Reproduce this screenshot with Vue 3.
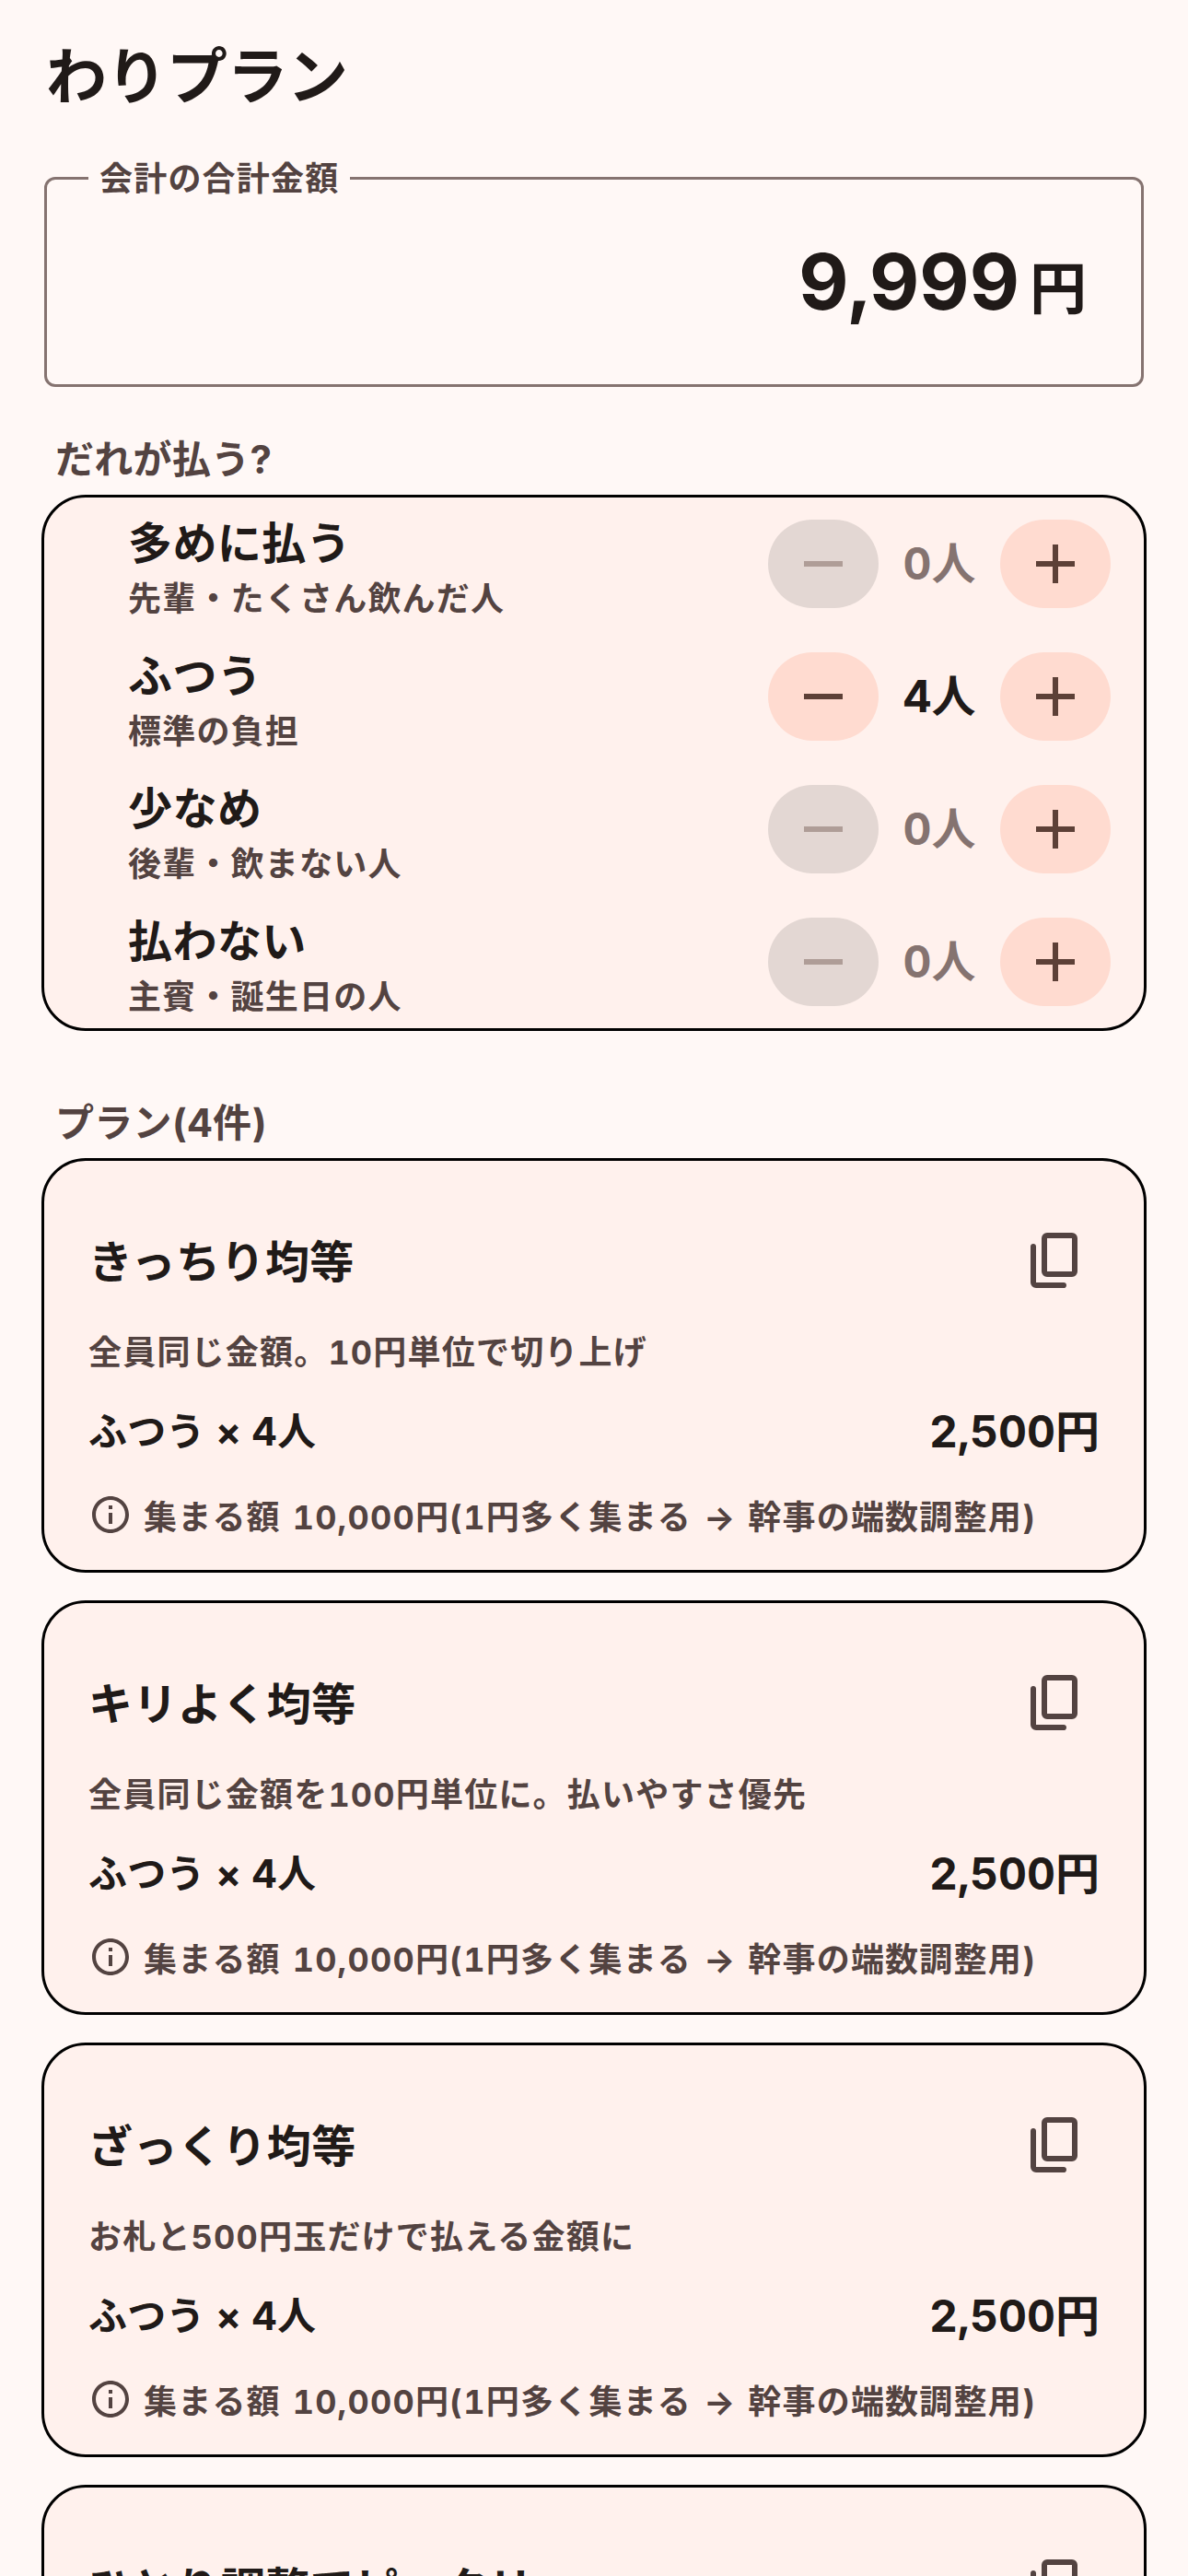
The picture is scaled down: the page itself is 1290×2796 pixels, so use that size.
<script setup>
const rows = [
  { name: '多めに払う', desc: '先輩・たくさん飲んだ人', count: 0 },
  { name: 'ふつう', desc: '標準の負担', count: 4 },
  { name: '少なめ', desc: '後輩・飲まない人', count: 0 },
  { name: '払わない', desc: '主賓・誕生日の人', count: 0 },
]
const note = '集まる額 10,000円(1円多く集まる → 幹事の端数調整用)'
const plans = [
  { title: 'きっちり均等', desc: '全員同じ金額。10円単位で切り上げ', who: 'ふつう × 4人', price: '2,500円', note },
  { title: 'キリよく均等', desc: '全員同じ金額を100円単位に。払いやすさ優先', who: 'ふつう × 4人', price: '2,500円', note },
  { title: 'ざっくり均等', desc: 'お札と500円玉だけで払える金額に', who: 'ふつう × 4人', price: '2,500円', note },
  { title: 'ひとり調整でピッタリ' },
]
</script>

<template>
  <div class="page">
    <h1 class="title">わりプラン</h1>

    <div class="field">
      <span class="field-label">会計の合計金額</span>
      <div class="amount"><span class="amount-num">9,999</span><span class="amount-unit">円</span></div>
    </div>

    <h2 class="section who-label">だれが払う?</h2>
    <section class="card people">
      <div v-for="r in rows" :key="r.name" class="row">
        <div class="row-text">
          <div class="row-name">{{ r.name }}</div>
          <div class="row-desc">{{ r.desc }}</div>
        </div>
        <div class="stepper">
          <button class="step" :class="{ off: r.count === 0 }" type="button" aria-label="減らす">
            <svg viewBox="0 0 24 24" width="72" height="72"><path d="M19 13H5v-2h14v2z" /></svg>
          </button>
          <span class="count" :class="{ zero: r.count === 0 }">{{ r.count }}人</span>
          <button class="step" type="button" aria-label="増やす">
            <svg viewBox="0 0 24 24" width="72" height="72"><path d="M19 13h-6v6h-2v-6H5v-2h6V5h2v6h6v2z" /></svg>
          </button>
        </div>
      </div>
    </section>

    <h2 class="section plan-label">プラン(4件)</h2>
    <div class="plans">
      <article v-for="p in plans" :key="p.title" class="card plan">
        <div class="plan-head">
          <div class="plan-title">{{ p.title }}</div>
          <button class="copy" type="button" aria-label="コピー">
            <svg viewBox="0 -960 960 960" width="72" height="72"><path d="M360-240q-33 0-56.5-23.5T280-320v-480q0-33 23.5-56.5T360-880h360q33 0 56.5 23.5T800-800v480q0 33-23.5 56.5T720-240H360Zm0-80h360v-480H360v480ZM200-80q-33 0-56.5-23.5T120-160v-520q0-17 11.5-28.5T160-720q17 0 28.5 11.5T200-680v520h400q17 0 28.5 11.5T640-120q0 17-11.5 28.5T600-80H200Z" /></svg>
          </button>
        </div>
        <template v-if="p.desc">
          <div class="plan-desc">{{ p.desc }}</div>
          <div class="plan-price">
            <span class="who">{{ p.who }}</span>
            <span class="price">{{ p.price }}</span>
          </div>
          <div class="plan-note">
            <svg viewBox="0 0 24 24" width="48" height="48"><path d="M11 7h2v2h-2zm0 4h2v6h-2zm1-9C6.480 2 2 6.480 2 12s4.480 10 10 10 10-4.480 10-10S17.520 2 12 2zm0 18c-4.410 0-8-3.590-8-8s3.590-8 8-8 8 3.590 8 8-3.590 8-8 8z" /></svg>
            <span class="note-text">{{ p.note }}</span>
          </div>
        </template>
      </article>
    </div>
  </div>
</template>

<style>
html, body { margin: 0; background: #fff8f6; }
</style>

<style scoped>
.page {
  box-sizing: border-box;
  width: 1290px;
  height: 2796px;
  overflow: hidden;
  padding: 0 45px;
  background: #fff8f6;
  color: #201a18;
  font-family: Inter, "Noto Sans CJK JP", sans-serif;
  font-variant-numeric: tabular-nums;
}
.title {
  margin: 0;
  padding-left: 5px;
  height: 192px;
  box-sizing: border-box;
  padding-top: 41px;
  font-size: 66px;
  line-height: 84px;
  font-weight: 700;
  letter-spacing: -0.5px;
}
.field {
  position: relative;
  box-sizing: border-box;
  height: 228px;
  margin: 0 3px;
  border: 3px solid #857370;
  border-radius: 12px;
  padding: 0 59px 0 42px;
  display: flex;
  align-items: center;
  justify-content: flex-end;
}
.field-label {
  position: absolute;
  left: 45px;
  top: -25px;
  padding: 0 12px;
  background: #fff8f6;
  color: #534341;
  font-size: 36px;
  line-height: 48px;
  letter-spacing: 1.2px;
  font-weight: 700;
}
.amount { display: flex; align-items: baseline; gap: 11px; padding-top: 8px; }
.amount-num { font-size: 84px; line-height: 108px; font-weight: 700; }
.amount-unit { font-size: 62px; line-height: 108px; font-weight: 700; }
.section {
  margin: 0;
  padding-left: 15px;
  color: #534341;
  font-size: 42px;
  line-height: 60px;
  font-weight: 700;
  letter-spacing: 0.3px;
}
.who-label { padding-top: 49px; padding-bottom: 8px; }
.plan-label { padding-top: 70px; padding-bottom: 8px; }
.card {
  box-sizing: border-box;
  border: 3px solid #000;
  border-radius: 48px;
  background: #fff1ed;
}
.row {
  height: 144px;
  display: flex;
  align-items: center;
  justify-content: space-between;
  padding: 0 36px 0 91px;
}
.row-text { padding-top: 4px; }
.row-name {
  font-size: 48px;
  line-height: 72px;
  font-weight: 700;
  letter-spacing: 0.45px;
}
.row-desc {
  color: #534341;
  font-size: 36px;
  line-height: 48px;
  letter-spacing: 1.2px;
  font-weight: 700;
}
.stepper { display: flex; align-items: center; }
.step {
  width: 120px;
  height: 96px;
  padding: 0;
  border: 0;
  border-radius: 48px;
  background: #ffdbd0;
  color: #5d4037;
  display: flex;
  align-items: center;
  justify-content: center;
}
.step svg { fill: currentColor; display: block; }
.step.off { background: #e3d7d3; }
.step.off svg { opacity: 0.38; }
.count {
  width: 132px;
  text-align: center;
  font-size: 48px;
  line-height: 72px;
  font-weight: 700;
}
.count.zero { color: #857370; }
.plans { display: flex; flex-direction: column; gap: 30px; }
.plan { padding: 36px 48px 36px; flex: none; }
.plan-head {
  height: 144px;
  margin-right: -24px;
  display: flex;
  align-items: center;
  justify-content: space-between;
}
.plan-title { padding-top: 4px; font-size: 48px; line-height: 72px; font-weight: 700; letter-spacing: 0.45px; }
.copy {
  width: 144px;
  height: 144px;
  padding: 0;
  border: 0;
  background: none;
  color: #534341;
  display: flex;
  align-items: center;
  justify-content: center;
}
.copy svg { fill: currentColor; display: block; }
.plan-desc {
  padding-top: 2px;
  color: #534341;
  font-size: 36px;
  line-height: 52px;
  letter-spacing: 1.2px;
  font-weight: 700;
}
.plan-price {
  margin-top: 24px;
  height: 72px;
  display: flex;
  align-items: center;
  justify-content: space-between;
}
.who { font-size: 42px; line-height: 60px; font-weight: 700; letter-spacing: 0.3px; }
.price { font-size: 48px; line-height: 72px; font-weight: 700; }
.plan-note {
  margin-top: 30px;
  height: 48px;
  display: flex;
  align-items: center;
  gap: 12px;
  color: #534341;
  font-size: 36px;
  line-height: 48px;
  letter-spacing: 1.2px;
  font-weight: 700;
}
.note-text { padding-top: 5px; word-spacing: 2px; }
.plan-note svg { fill: currentColor; display: block; flex: none; }
</style>
